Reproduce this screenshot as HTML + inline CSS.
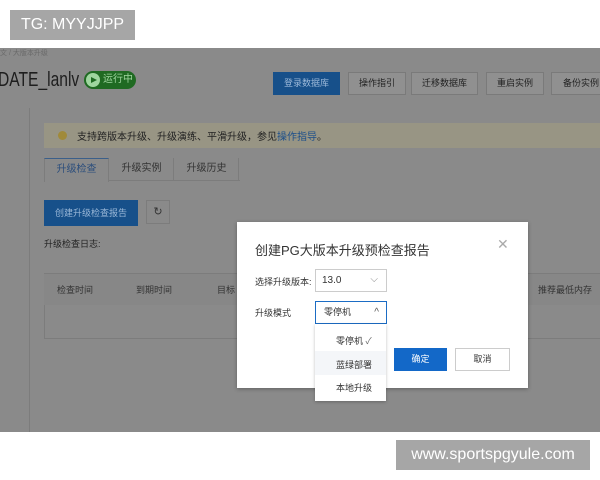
<!DOCTYPE html>
<html><head><meta charset="utf-8"><style>
*{margin:0;padding:0;box-sizing:border-box}
body{width:600px;height:480px;background:#fff;position:relative;overflow:hidden;font-family:"Liberation Sans","Noto Sans CJK SC",sans-serif;color:#333}
.a{position:absolute}
.shot{left:0;top:48px;width:600px;height:384px;background:#8a8a8a;overflow:hidden}
.btn{position:absolute;top:24px;height:23px;border:1px solid #7a7a7a;background:#909090;font-size:9px;color:#222;text-align:center;line-height:21px}
.tag{background:#a6a6a6;color:#fff;font-size:16px;text-align:center}
</style></head><body>
<div class="a tag" style="left:10px;top:10px;width:125px;height:30px;line-height:30px">TG: MYYJJPP</div>
<div class="a tag" style="left:396px;top:440px;width:194px;height:30px;line-height:30px">www.sportspgyule.com</div>

<div class="a shot">
 <div class="a" style="left:0;top:0;font-size:7px;color:#6a6a6a">文 / 大版本升级</div>
 <div class="a" style="left:-2px;top:21px;font-size:20px;color:#1e1e1e;transform:scaleX(.78);transform-origin:left top">DATE_lanlv</div>
 <div class="a" style="left:84px;top:23px;width:52px;height:18px;border-radius:9px;background:#1f6a22;color:#9fd69f;font-size:10px;line-height:18px;padding-left:19px">运行中</div>
 <div class="a" style="left:86px;top:25px;width:14px;height:14px;border-radius:7px;background:#9fd69f"></div>
 <div class="a" style="left:91px;top:28.5px;width:0;height:0;border-left:6px solid #1f6a22;border-top:3.5px solid transparent;border-bottom:3.5px solid transparent"></div>
 <div class="btn" style="left:273px;width:67px;background:#17508a;border-color:#17508a;color:#9bb8d8">登录数据库</div>
 <div class="btn" style="left:348px;width:58px">操作指引</div>
 <div class="btn" style="left:411px;width:67px">迁移数据库</div>
 <div class="btn" style="left:486px;width:58px">重启实例</div>
 <div class="btn" style="left:551px;width:60px">备份实例</div>
 <div class="a" style="left:29px;top:60px;width:1px;height:330px;background:#7c7c7c"></div>
 <div class="a" style="left:44px;top:75px;width:570px;height:25px;background:#989584"></div>
 <div class="a" style="left:58px;top:83px;width:9px;height:9px;border-radius:5px;background:#a08a3a"></div>
 <div class="a" style="left:77px;top:80px;font-size:10px;color:#222">支持跨版本升级、升级演练、平滑升级，参见<span style="color:#1b4e8a">操作指导</span>。</div>
 <div class="a" style="left:44px;top:110px;width:196px;height:23px;border-bottom:1px solid #7c7c7c"></div>
 <div class="a" style="left:44px;top:110px;width:65px;height:24px;border:1px solid #7c7c7c;border-bottom:none;border-top:1px solid #3b5f8a;background:#8a8a8a;font-size:10px;line-height:22px;text-align:center;color:#2c4e7c">升级检查</div>
 <div class="a" style="left:110px;top:110px;width:64px;height:23px;border-right:1px solid #7c7c7c;font-size:10px;line-height:22px;text-align:center;color:#333">升级实例</div>
 <div class="a" style="left:175px;top:110px;width:64px;height:23px;border-right:1px solid #7c7c7c;font-size:10px;line-height:22px;text-align:center;color:#333">升级历史</div>
 <div class="a" style="left:44px;top:152px;width:94px;height:26px;background:#17508a;color:#9bb8d8;font-size:9px;line-height:26px;text-align:center">创建升级检查报告</div>
 <div class="a" style="left:146px;top:152px;width:24px;height:24px;border:1px solid #7c7c7c;font-size:11px;line-height:22px;text-align:center;color:#333">↻</div>
 <div class="a" style="left:44px;top:189px;font-size:9px;color:#222">升级检查日志:</div>
 <div class="a" style="left:44px;top:225px;width:570px;height:32px;background:#878787;border-top:1px solid #7c7c7c"></div>
 <div class="a" style="left:44px;top:257px;width:570px;height:34px;border:1px solid #7c7c7c;border-top:none"></div>
 <div class="a" style="left:57px;top:235px;font-size:9px;color:#333">检查时间</div>
 <div class="a" style="left:136px;top:235px;font-size:9px;color:#333">到期时间</div>
 <div class="a" style="left:217px;top:235px;font-size:9px;color:#333">目标</div>
 <div class="a" style="left:538px;top:235px;font-size:9px;color:#333">推荐最低内存</div>
</div>

<div class="a" style="left:237px;top:222px;width:291px;height:166px;background:#fff;box-shadow:0 1px 4px rgba(0,0,0,.3)"></div>
<div class="a" style="left:255px;top:240px;font-size:13px;color:#333">创建PG大版本升级预检查报告</div>
<div class="a" style="left:497px;top:236px;font-size:14px;color:#aaa">✕</div>
<div class="a" style="left:255px;top:275px;font-size:9px;color:#333">选择升级版本:</div>
<div class="a" style="left:315px;top:269px;width:72px;height:23px;border:1px solid #ccc;font-size:10px;line-height:21px;padding-left:6px">13.0<span style="position:absolute;right:8px;top:-1px;color:#888">⌵</span></div>
<div class="a" style="left:255px;top:306px;font-size:9px;color:#333">升级模式</div>
<div class="a" style="left:315px;top:301px;width:72px;height:23px;border:1px solid #1b6cc4;font-size:9px;line-height:21px;padding-left:8px">零停机<span style="position:absolute;right:7px;top:0;color:#555;font-size:10px">^</span></div>
<div class="a" style="left:315px;top:324px;width:71px;height:77px;background:#fff;box-shadow:0 1px 3px rgba(0,0,0,.25)"></div>
<div class="a" style="left:315px;top:351px;width:71px;height:24px;background:#f4f6f9"></div>
<div class="a" style="left:336px;top:334px;font-size:9px">零停机 <span style="color:#666">✓</span></div>
<div class="a" style="left:336px;top:358px;font-size:9px">蓝绿部署</div>
<div class="a" style="left:336px;top:381px;font-size:9px">本地升级</div>
<div class="a" style="left:394px;top:348px;width:53px;height:23px;background:#1368c8;color:#fff;font-size:9px;line-height:23px;text-align:center">确定</div>
<div class="a" style="left:455px;top:348px;width:55px;height:23px;border:1px solid #ccc;font-size:9px;line-height:21px;text-align:center">取消</div>
</body></html>
